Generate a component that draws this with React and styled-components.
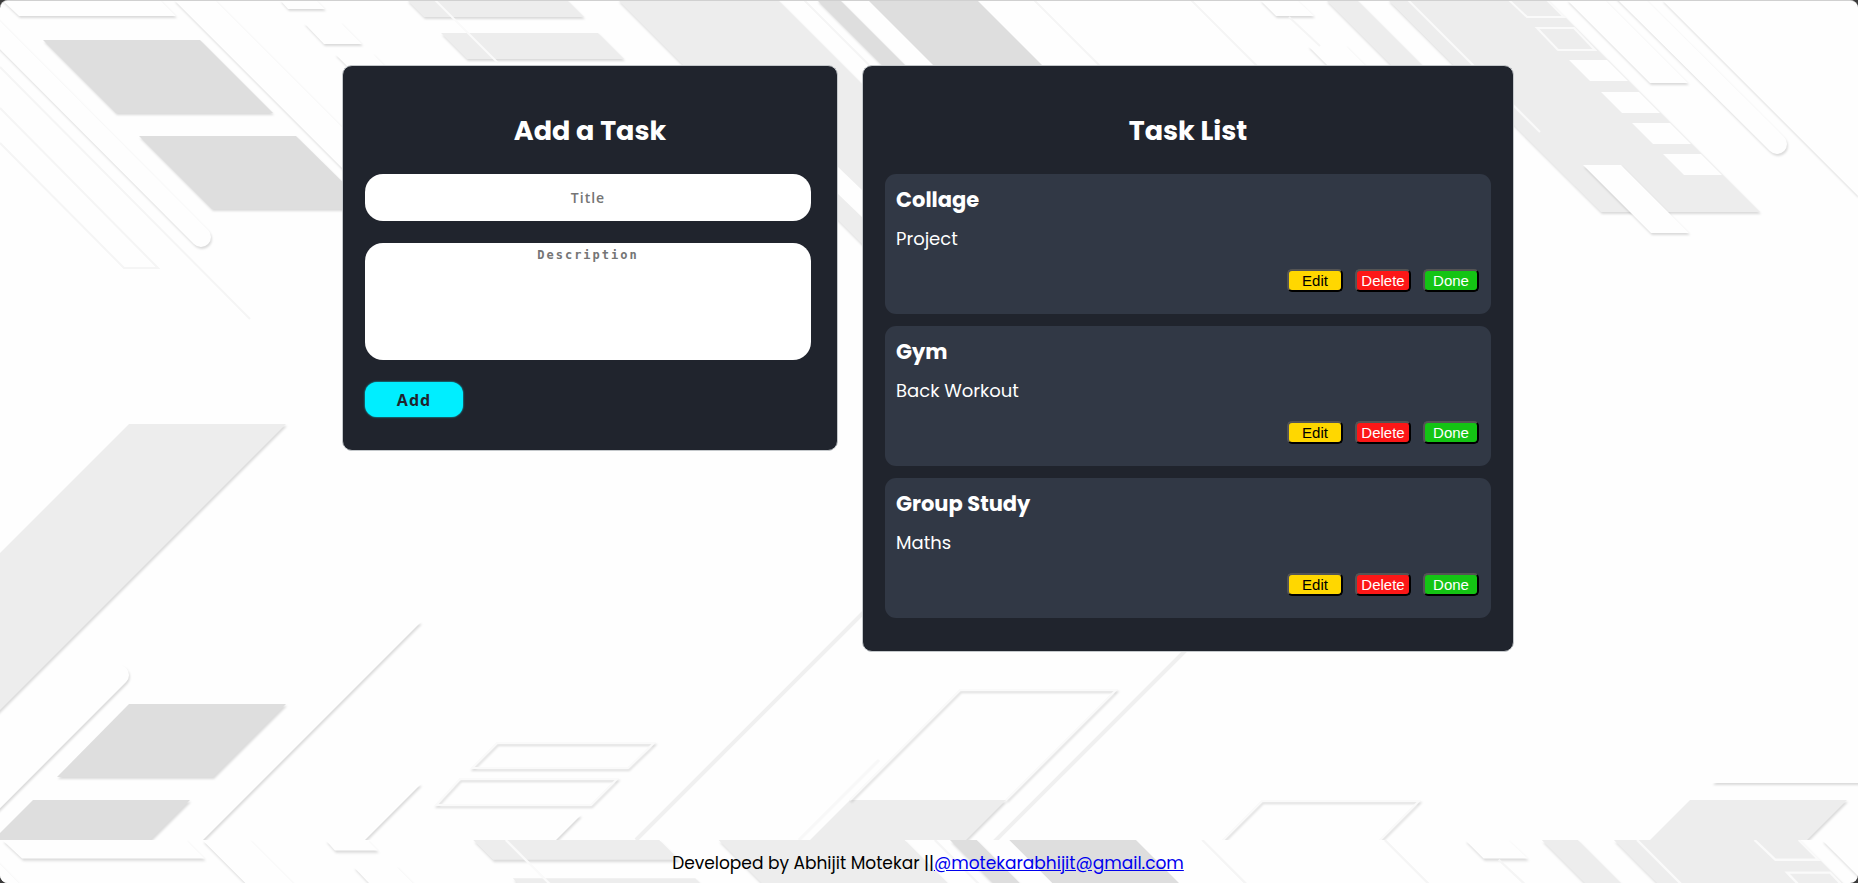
import React, { useState } from "react";
import styled, { createGlobalStyle } from "styled-components";

const GlobalStyle = createGlobalStyle`
  *, *::before, *::after { box-sizing: border-box; }
  body {
    margin: 0;
    background: #3a3a3a;
    font-family: Poppins, Inter, "Open Sans", sans-serif;
  }
`;

const Page = styled.div`
  display: flex;
  flex-direction: column;
  min-height: 100vh;
  overflow: hidden;
  border-top: 1px solid #d0d0d0;
  border-radius: 8px;
  background: #fefefe;
`;

const Main = styled.main`
  position: relative;
  flex: 1;
  padding: 64px 26px 64px 24px;
`;

const Backdrop = styled.svg`
  position: absolute;
  inset: 0;
  width: 100%;
  height: 100%;

  .raised { filter: drop-shadow(1px 2px 1px rgba(0, 0, 0, 0.14)); }
  .line { fill: none; stroke: #f5f5f5; stroke-width: 2; }
`;

const Columns = styled.div`
  position: relative;
  display: grid;
  grid-template-columns: 496fr 652fr;
  gap: 24px;
  align-items: start;
  max-width: 1172px;
  margin: 0 auto;
`;

const Card = styled.section`
  padding: 44px 22px 33px;
  border: 1px solid #c4c8cb;
  border-radius: 10px;
  background: #20242d;
  color: #fff;
`;

const CardTitle = styled.h2`
  margin: 0 0 22px;
  font-size: 27px;
  font-weight: 700;
  line-height: 42px;
  text-align: center;
`;

const Form = styled.form`
  display: flex;
  flex-direction: column;
  align-items: flex-start;
  gap: 22px;
  padding-right: 4px;
`;

const TitleInput = styled.input`
  width: 100%;
  height: 47px;
  border: 0;
  border-radius: 18px;
  background: #fff;
  font: 600 14px "Open Sans", "Noto Sans", sans-serif;
  letter-spacing: 1px;
  text-align: center;
  &::placeholder { color: #757575; }
`;

const DescriptionInput = styled.textarea`
  display: block;
  width: 100%;
  height: 117px;
  padding: 4px;
  border: 0;
  border-radius: 18px;
  background: #fff;
  font: 700 12px/17px "DejaVu Sans Mono", monospace;
  letter-spacing: 2px;
  text-align: center;
  resize: none;
  &::placeholder { color: #757575; }
`;

const AddButton = styled.button`
  width: 98px;
  height: 35px;
  padding: 0;
  border: 0;
  border-radius: 12px;
  background: #00eeff;
  box-shadow: 0 0 2px #00eeff;
  color: #20242d;
  font: 700 16px "Open Sans", "Noto Sans", sans-serif;
  letter-spacing: 1px;
`;

const TaskItems = styled.ul`
  display: flex;
  flex-direction: column;
  gap: 12px;
  margin: 0;
  padding: 0;
  list-style: none;
`;

const TaskItem = styled.li`
  padding: 11px 12px 22px 11px;
  border-radius: 11px;
  background: #313845;
`;

const TaskTitle = styled.h3`
  margin: 0 0 9px;
  font-size: 21px;
  font-weight: 700;
  line-height: 30px;
`;

const TaskText = styled.p`
  margin: 0 0 16px;
  font-size: 18px;
  line-height: 29px;
`;

const Actions = styled.div`
  display: flex;
  justify-content: flex-end;
  gap: 12px;
`;

const ActionButton = styled.button`
  width: 56px;
  height: 23px;
  padding: 0;
  border: 2px outset #000;
  border-radius: 5px;
  background: ${(p) => p.$fill};
  color: ${(p) => p.$ink || "#fff"};
  font: 15px/18px "Liberation Sans", Arial, sans-serif;
`;

const Footer = styled.footer`
  position: relative;
  padding: 11px 26px 8px 24px;
  text-align: center;
`;

const Credit = styled.p`
  position: relative;
  margin: 0;
  color: #000;
  font-size: 17px;
  line-height: 24px;
  a { color: #0000ee; }
`;

const LIGHT = "#ededed";
const DARK = "#dedede";
const WHITE = "#fefefe";

const whiteTiles = [[1569, 60], [1601, 92], [1632, 123], [1663, 154]];

function TopShapes() {
  return (
    <>
      <path className="line" d="M0 108L158 268H124L0 143M0 67L250 319" />
      <g className="raised" fill={WHITE}>
        <path d="M2 0H160L176 16H19z" />
        <path d="M-20 15L201 237" stroke={WHITE} strokeWidth="20" strokeLinecap="round" />
        <path d="M174 0H215L395 180V221z" />
        <path d="M280 0H316L325 9H288z" />
        <path d="M304 23H341L362 44H324z" />
        <path d="M335 54H373L394 75H356z" />
        <path d="M1260 0H1297L1314 16H1276z" />
        <path d="M1308 46H1346L1380 80H1342z" />
      </g>
      <g className="raised" fill={DARK}>
        <path d="M43 40H200L273 113H116z" />
        <path d="M139 136H296L370 209H212z" />
        <path d="M817 0H840L930 90H907z" />
      </g>
      <path fill={DARK} d="M868 0H977L1067 90H958z" />
      <g className="raised" fill={LIGHT}>
        <path d="M407 0H567L584 17H424z" />
        <path d="M441 33H598L624 59H467z" />
        <path d="M618 0H778L938 160V320z" />
        <path d="M1326 0H1357L1447 90H1416z" />
        <path d="M1388 0H1548L1760 212H1601z" />
      </g>
      <path fill={WHITE} d="M810 140L863 191V218L810 167z" />
      <path className="line" d="M804 0L869 65M1034 0L1104 70M1191 0L1261 70M1289 17L1320 46M1819 0L1860 41" />
      <g fill="none" stroke="#fafafa" strokeWidth="2">
        <path d="M435 0L498 63M1408 0L1540 132" />
        <path d="M1509 0L1527 17H1564L1547 0M1537 28H1574L1595 50H1558z" />
      </g>
      <g fill={WHITE}>
        {whiteTiles.map(([x, y]) => (
          <path key={x} d={`M${x} ${y}h38l21 21h-38z`} />
        ))}
      </g>
      <g className="raised" fill={WHITE}>
        <path d="M1583 165H1621L1689 233H1651z" />
        <path d="M1567 0H1605L1688 83H1650z" />
        <path d="M1617 -15L1777 144" stroke={WHITE} strokeWidth="20" strokeLinecap="round" />
        <path d="M1662 0H1858V196z" />
      </g>
    </>
  );
}

function BottomShapes() {
  return (
    <>
      <g className="raised" fill={LIGHT}>
        <path d="M129 424H286L-4 714V557z" />
        <path d="M850 800H1006L966 840H810z" />
        <path d="M1690 800H1847L1807 840H1650z" />
      </g>
      <g className="raised" fill={DARK}>
        <path d="M129 704H286L213 777H57z" />
        <path d="M33 800H190L150 840H-7z" />
      </g>
      <g className="raised" fill={WHITE}>
        <path d="M-20 814L119 675" stroke={WHITE} strokeWidth="20" strokeLinecap="round" />
        <path d="M386 622H421L203 840H168z" />
        <path d="M384 784H421L365 840H328z" />
        <path d="M423 815H581L556 840H398z" />
        <path d="M1860 634L1712 783H1860z" />
      </g>
      <path stroke="#f0f0f0" strokeWidth="4" d="M878 598L636 840M1196 640L994 842" />
      <g className="raised" fill="none" stroke="#fafafa" strokeWidth="2">
        <path d="M497 743H654L628 768H472z" />
        <path d="M460 779H617L591 805H436z" />
        <path d="M850 800L960 690H1116L1006 800" />
        <path d="M1222 841L1262 801H1419L1379 841" />
      </g>
      <path d="M879 760L799 840" stroke="#f8f8f8" strokeWidth="3" />
    </>
  );
}

const initialTasks = [
  { title: "Collage", text: "Project" },
  { title: "Gym", text: "Back Workout" },
  { title: "Group Study", text: "Maths" },
];

export default function App() {
  const [tasks, setTasks] = useState(initialTasks);
  const [title, setTitle] = useState("");
  const [text, setText] = useState("");

  const remove = (index) => setTasks(tasks.filter((_, i) => i !== index));
  const edit = (index) => {
    setTitle(tasks[index].title);
    setText(tasks[index].text);
    remove(index);
  };
  const submit = (event) => {
    event.preventDefault();
    if (!title.trim()) return;
    setTasks([...tasks, { title, text }]);
    setTitle("");
    setText("");
  };

  return (
    <>
      <GlobalStyle />
      <Page>
        <Main>
          <Backdrop viewBox="0 1 1858 839" preserveAspectRatio="xMinYMin slice" aria-hidden="true">
            <TopShapes />
            <BottomShapes />
          </Backdrop>
          <Columns>
            <Card>
              <CardTitle>Add a Task</CardTitle>
              <Form onSubmit={submit}>
                <TitleInput
                  aria-label="Title"
                  placeholder="Title"
                  value={title}
                  onChange={(e) => setTitle(e.target.value)}
                />
                <DescriptionInput
                  aria-label="Description"
                  placeholder="Description"
                  value={text}
                  onChange={(e) => setText(e.target.value)}
                />
                <AddButton type="submit">Add</AddButton>
              </Form>
            </Card>
            <Card>
              <CardTitle>Task List</CardTitle>
              <TaskItems>
                {tasks.map((task, index) => (
                  <TaskItem key={task.title}>
                    <TaskTitle>{task.title}</TaskTitle>
                    <TaskText>{task.text}</TaskText>
                    <Actions>
                      <ActionButton type="button" $fill="#ffd700" $ink="#000" onClick={() => edit(index)}>Edit</ActionButton>
                      <ActionButton type="button" $fill="#fc1717" onClick={() => remove(index)}>Delete</ActionButton>
                      <ActionButton type="button" $fill="#14c414" onClick={() => remove(index)}>Done</ActionButton>
                    </Actions>
                  </TaskItem>
                ))}
              </TaskItems>
            </Card>
          </Columns>
        </Main>
        <Footer>
          <Backdrop viewBox="0 0 1598 37" preserveAspectRatio="xMinYMin slice" aria-hidden="true">
            <TopShapes />
          </Backdrop>
          <Credit>
            Developed by Abhijit Motekar ||
            <a href="mailto:motekarabhijit@gmail.com">@motekarabhijit@gmail.com</a>
          </Credit>
        </Footer>
      </Page>
    </>
  );
}
